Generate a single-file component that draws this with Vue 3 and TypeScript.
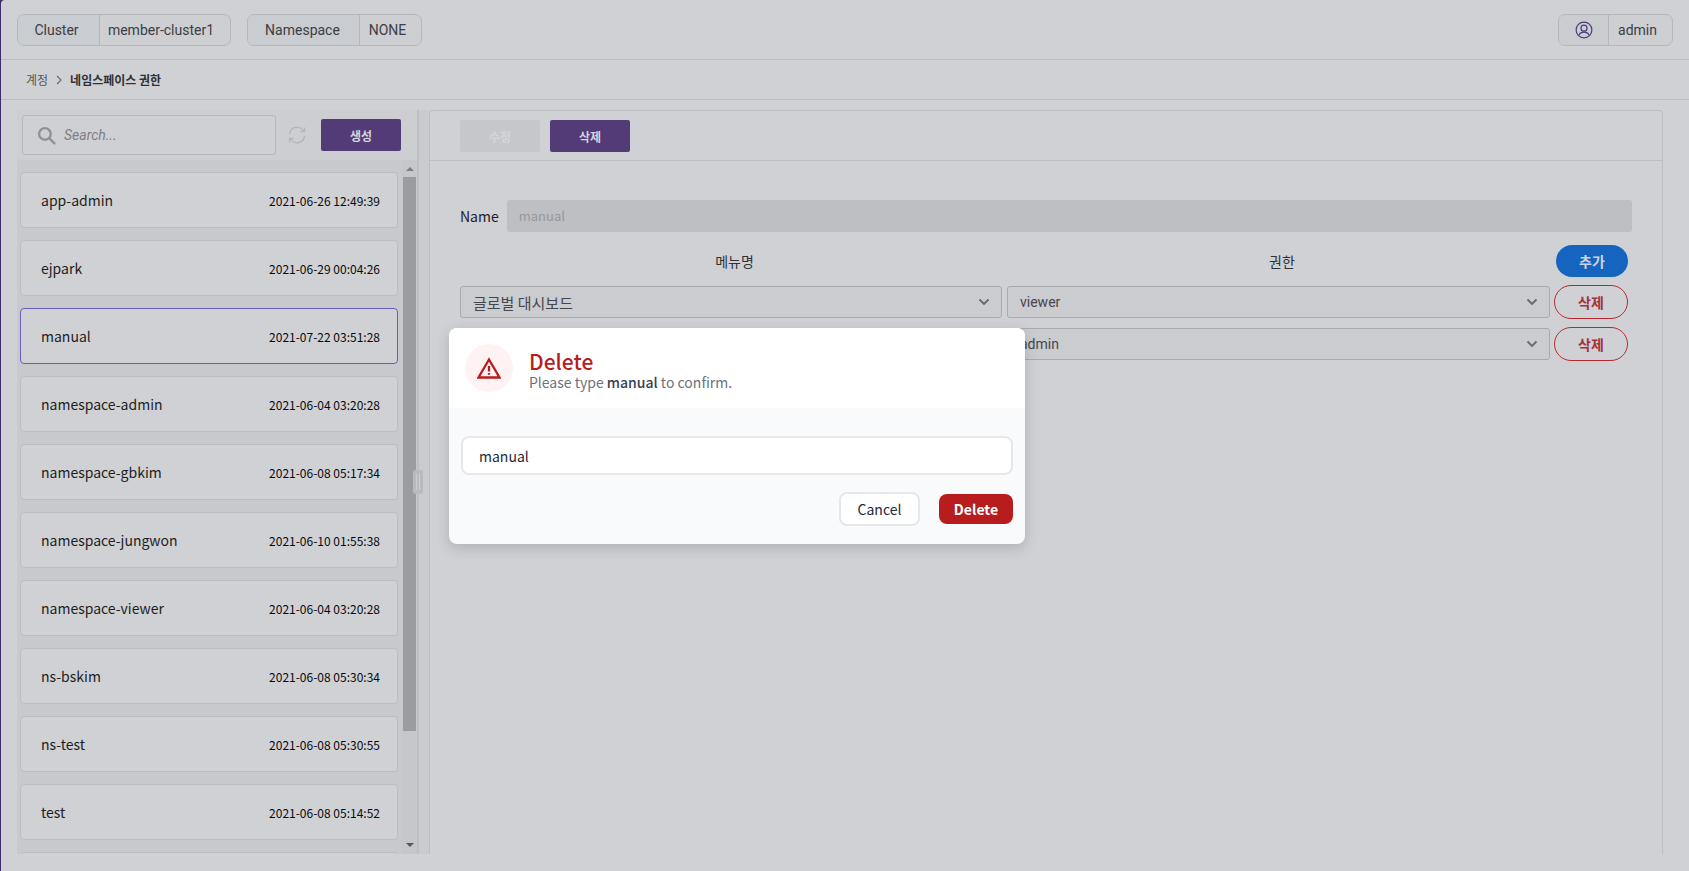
<template>
	<div class="app">
		<div class="shell">
			<header class="topbar">
				<div class="addon">
					<span class="addon__label addon__label--cluster">Cluster</span>
					<span class="addon__value addon__value--cluster">member-cluster1</span>
				</div>
				<div class="addon">
					<span class="addon__label addon__label--ns">Namespace</span>
					<span class="addon__value addon__value--ns">NONE</span>
				</div>
				<div class="addon addon--user">
					<span class="addon__label addon__label--user">
						<svg width="18" height="18" viewBox="0 0 24 24" fill="none" stroke="#4b3a78" stroke-width="1.6">
							<circle cx="12" cy="12" r="10.5" />
							<circle cx="12" cy="9.5" r="4" />
							<path d="M5 19c1.5-3 4-4.2 7-4.2s5.500 1.200 7 4.200" />
						</svg>
					</span>
					<span class="addon__value addon__value--user">admin</span>
				</div>
			</header>

			<nav class="crumbs">
				<span class="crumbs__root">계정</span>
				<svg width="8" height="10" viewBox="0 0 8 10" fill="none" stroke="#6b6d72" stroke-width="1.2"><path d="M2 1l4 4-4 4" /></svg>
				<span class="crumbs__current">네임스페이스 권한</span>
			</nav>

			<main class="content">
				<section class="side">
					<div class="side__tools">
						<div class="search">
							<svg width="19" height="19" viewBox="0 0 18 18" fill="none" stroke="#8f9196" stroke-width="2.200">
								<circle cx="7.500" cy="7.500" r="5.500" />
								<path d="M11.500 11.500l5 5" stroke-linecap="round" />
							</svg>
							<span>Search...</span>
						</div>
						<svg class="refresh" width="20" height="20" viewBox="0 0 24 24" fill="none" stroke="#b2b4b8" stroke-width="1.500">
							<path d="M3 11a9 9 0 0 1 15.500-5.500L21 8M21 3v5h-5" />
							<path d="M21 13a9 9 0 0 1-15.500 5.500L3 16M3 21v-5h5" />
						</svg>
						<button class="btn btn--primary btn--create" type="button">생성</button>
					</div>
					<div class="side__body">
						<ul class="list">
							<li v-for="item in items"
								:key="item.name"
								class="list__item"
								:class="{ 'list__item--active': item.name === 'manual' }">
								<span class="list__name">{{ item.name }}</span>
								<span class="list__date">{{ item.date }}</span>
							</li>
							<!-- next row, only its top edge shows above the fold -->
							<li class="list__item" />
						</ul>
						<div class="scroll">
							<span class="scroll__up" />
							<span class="scroll__thumb" />
							<span class="scroll__down" />
						</div>
					</div>
				</section>

				<div class="splitter">
					<span class="splitter__handle" />
				</div>

				<section class="detail">
					<div class="detail__tools">
						<button class="btn btn--disabled" type="button">수정</button>
						<button class="btn btn--primary" type="button">삭제</button>
					</div>
					<div class="detail__form">
						<div class="name-row">
							<label>Name</label>
							<div class="name-row__input">manual</div>
						</div>
						<div class="perm-grid">
							<div class="perm-grid__head">메뉴명</div>
							<div class="perm-grid__head">권한</div>
							<button class="pill pill--add" type="button">추가</button>
							<template v-for="row in rows" :key="row.role">
								<div class="select">
									<span class="select__text">{{ row.menu }}</span>
									<svg width="12" height="8" viewBox="0 0 12 8" fill="none" stroke="#66686d" stroke-width="1.800"><path d="M1.500 1.500L6 6l4.500-4.500" /></svg>
								</div>
								<div class="select">
									<span class="select__text select__text--role">{{ row.role }}</span>
									<svg width="12" height="8" viewBox="0 0 12 8" fill="none" stroke="#66686d" stroke-width="1.800"><path d="M1.500 1.500L6 6l4.500-4.500" /></svg>
								</div>
								<button class="pill pill--remove" type="button">삭제</button>
							</template>
						</div>
					</div>
				</section>
			</main>
		</div>

		<div class="dialog">
			<div class="dialog__head">
				<div class="dialog__icon">
					<svg width="24" height="24" viewBox="0 0 24 24" fill="none" stroke="#b91c1c" stroke-width="2.300">
						<path d="M12 3.500L22.500 21.500H1.500z" stroke-linejoin="miter" />
						<path d="M12 10v5.500M12 17v1.800" />
					</svg>
				</div>
				<div class="dialog__copy">
					<div class="dialog__title">Delete</div>
					<div class="dialog__text">Please type <strong>manual</strong> to confirm.</div>
				</div>
			</div>
			<div class="dialog__body">
				<div class="dialog__input">manual</div>
				<div class="dialog__actions">
					<button class="dialog__cancel" type="button">Cancel</button>
					<button class="dialog__delete" type="button">Delete</button>
				</div>
			</div>
		</div>
	</div>
</template>

<script setup lang="ts">
const items = [
	{ name: 'app-admin', date: '2021-06-26 12:49:39' },
	{ name: 'ejpark', date: '2021-06-29 00:04:26' },
	{ name: 'manual', date: '2021-07-22 03:51:28' },
	{ name: 'namespace-admin', date: '2021-06-04 03:20:28' },
	{ name: 'namespace-gbkim', date: '2021-06-08 05:17:34' },
	{ name: 'namespace-jungwon', date: '2021-06-10 01:55:38' },
	{ name: 'namespace-viewer', date: '2021-06-04 03:20:28' },
	{ name: 'ns-bskim', date: '2021-06-08 05:30:34' },
	{ name: 'ns-test', date: '2021-06-08 05:30:55' },
	{ name: 'test', date: '2021-06-08 05:14:52' },
]

// second row's menu sits behind the dialog
const rows = [
	{ menu: '글로벌 대시보드', role: 'viewer' },
	{ menu: '', role: 'admin' },
]
</script>

<style>
html,
body {
	margin: 0;
	overflow: hidden;
}
</style>

<style scoped>
.app {
	position: relative;
	width: 1689px;
	height: 871px;
	overflow: hidden;
	background: #3d2c6e;
	font-family: "Noto Sans CJK KR", "Noto Sans", sans-serif;
	color: #1f2024;
}

.shell {
	display: flex;
	flex-direction: column;
	height: 871px;
	margin-left: 1px;
	background: #d0d1d5;
	border-top-left-radius: 4px;
	padding-bottom: 17px;
	box-sizing: border-box;
}

.topbar {
	display: flex;
	flex: none;
	align-items: center;
	gap: 16px;
	height: 59px;
	padding: 0 16px;
	border-bottom: 1px solid #bdbec2;
	font-family: Roboto, sans-serif;
	font-size: 14px;
	color: #3c3e43;
}

.addon {
	display: flex;
	height: 32px;
	border: 1px solid #b5b7bb;
	border-radius: 7px;
	overflow: hidden;
	box-sizing: border-box;
	background: #cdcfd3;
}

.addon--user {
	margin-left: auto;
}

.addon__label {
	display: flex;
	align-items: center;
	justify-content: center;
	box-sizing: border-box;
	background: #c9ccd1;
	border-right: 1px solid #b5b7bb;
}

.addon__value {
	display: flex;
	align-items: center;
	justify-content: center;
	box-sizing: border-box;
	padding-right: 6px;
}

.addon__label--cluster { width: 82px; padding-right: 4px; }
.addon__value--cluster { width: 130px; padding-right: 8px; }
.addon__label--ns { width: 112px; padding-right: 2px; }
.addon__value--ns { width: 61px; }
.addon__label--user { width: 50px; }
.addon__value--user { width: 63px; }

.crumbs {
	display: flex;
	flex: none;
	align-items: center;
	gap: 7px;
	height: 39px;
	padding-left: 25px;
	border-bottom: 1px solid #bdbec2;
	font-size: 12px;
}

.crumbs__root {
	color: #54565b;
}

.crumbs__current {
	font-weight: 700;
	color: #2f3136;
}

.content {
	display: flex;
	flex: 1;
	min-height: 0;
	padding: 10px 26px 0 16px;
}

.side {
	display: flex;
	flex: none;
	flex-direction: column;
	width: 402px;
	box-sizing: border-box;
	background: #c8c9cd;
	border-right: 2px solid #bebfc3;
}

.side__tools {
	display: flex;
	flex: none;
	align-items: center;
	height: 50px;
	padding: 0 0 0 5px;
	background: #cdced2;
}

.search {
	display: flex;
	align-items: center;
	gap: 8px;
	width: 254px;
	height: 40px;
	padding-left: 14px;
	box-sizing: border-box;
	border: 1px solid #b5b7bb;
	border-radius: 3px;
	background: #cfd0d4;
	font-family: Roboto, sans-serif;
	font-size: 14px;
	font-style: italic;
	color: #7d7f84;
}

.refresh {
	margin: 0 14px 0 11px;
}

.btn {
	width: 80px;
	height: 32px;
	padding: 0;
	border: 0;
	border-radius: 2px;
	font-family: inherit;
	font-size: 12px;
	font-weight: 700;
}

.btn--primary {
	background: #533b78;
	color: #d6d3dc;
}

.btn--disabled {
	background: #c6c7cb;
	color: #d5d6d9;
}

.side__body {
	display: flex;
	flex: 1;
	min-height: 0;
}

.list {
	flex: 1;
	margin: 0;
	padding: 12px 4px 0 3px;
	list-style: none;
	overflow: hidden;
}

.list__item {
	display: flex;
	align-items: center;
	justify-content: space-between;
	height: 56px;
	margin-bottom: 12px;
	padding: 0 17px 0 20px;
	box-sizing: border-box;
	border: 1px solid #bcbdc2;
	border-radius: 4px;
	background: #d0d1d5;
}

.list__item--active {
	border-color: #6a5cc0;
}

.list__name {
	font-size: 14px;
	color: #1d1e22;
}

.list__date {
	font-size: 12px;
	color: #08090c;
}

.scroll {
	display: flex;
	flex: none;
	flex-direction: column;
	align-items: center;
	width: 15px;
	background: #c6c7cb;
}

.scroll__up,
.scroll__down {
	flex: none;
	width: 0;
	height: 0;
	border-left: 4px solid transparent;
	border-right: 4px solid transparent;
}

.scroll__up {
	margin: 7px 0 6px;
	border-bottom: 4px solid #7c7e83;
}

.scroll__down {
	margin-top: auto;
	margin-bottom: 7px;
	border-top: 4px solid #55575b;
}

.scroll__thumb {
	flex: none;
	width: 13px;
	height: 554px;
	background: #9b9ca0;
}

.splitter {
	position: relative;
	flex: none;
	width: 10px;
	background: #cacbcf;
}

.splitter__handle {
	position: absolute;
	left: -6px;
	top: 360px;
	display: flex;
	align-items: center;
	justify-content: center;
	width: 10px;
	height: 24px;
	border-radius: 3px;
	background: #b9babe;
}

.splitter__handle::before {
	content: "";
	width: 2px;
	height: 16px;
	border-left: 1px solid #cdced2;
	border-right: 1px solid #cdced2;
}

.detail {
	flex: 1;
	min-width: 0;
	box-sizing: border-box;
	border: 1px solid #bdbec2;
	border-bottom: 0;
	border-radius: 4px 4px 0 0;
}

.detail__tools {
	display: flex;
	gap: 10px;
	height: 50px;
	padding: 9px 30px 0;
	box-sizing: border-box;
	border-bottom: 1px solid #bdbec2;
}

.detail__form {
	padding: 39px 30px 0;
}

.name-row {
	display: flex;
	align-items: center;
	gap: 8px;
	font-size: 14px;
}

.name-row__input {
	flex: 1;
	height: 32px;
	padding-left: 12px;
	box-sizing: border-box;
	border-radius: 3px;
	background: #bebfc3;
	font-size: 13px;
	line-height: 31px;
	color: #96979c;
}

.perm-grid {
	display: grid;
	grid-template-columns: 542px 543px 78px;
	align-items: center;
	gap: 10px 5px;
	margin-top: 13px;
}

.perm-grid__head {
	padding-left: 7px;
	text-align: center;
	font-size: 14px;
	color: #2f3136;
}

.select {
	display: flex;
	align-items: center;
	justify-content: space-between;
	height: 32px;
	padding: 0 11px 0 12px;
	box-sizing: border-box;
	border: 1px solid #a9aaae;
	border-radius: 3px;
	background: #cbccd0;
	font-size: 15px;
	color: #45474c;
}

.select__text--role {
	font-family: Roboto, sans-serif;
	font-size: 14px;
}

.pill {
	height: 32px;
	padding: 0;
	border-radius: 17px;
	font-family: inherit;
	font-size: 14px;
	font-weight: 700;
}

.pill--add {
	width: 72px;
	margin: 0 0 -1px 1px;
	border: 0;
	background: #1464c0;
	color: #cfd5e0;
}

.pill--remove {
	width: 74px;
	height: 34px;
	margin: -1px 0 -1px -1px;
	border: 1px solid #b52a30;
	background: transparent;
	color: #a4323c;
}

.dialog {
	position: absolute;
	left: 449px;
	top: 328px;
	width: 576px;
	height: 216px;
	overflow: hidden;
	border-radius: 8px;
	background: #f9fafb;
	box-shadow: 0 4px 14px rgba(0, 0, 0, 0.16);
}

.dialog__head {
	display: flex;
	align-items: center;
	gap: 16px;
	height: 80px;
	padding-left: 16px;
	box-sizing: border-box;
	background: #fff;
}

.dialog__copy {
	padding-top: 3px;
}

.dialog__icon {
	display: flex;
	align-items: center;
	justify-content: center;
	width: 48px;
	height: 48px;
	border-radius: 50%;
	background: #fef2f2;
}

.dialog__title {
	font-size: 21px;
	font-weight: 500;
	line-height: 24px;
	color: #b91c1c;
}

.dialog__text {
	font-size: 14px;
	line-height: 18px;
	color: #6b7280;
}

.dialog__text strong {
	font-weight: 500;
	color: #374151;
}

.dialog__body {
	padding: 28px 12px 0;
}

.dialog__input {
	height: 39px;
	padding-left: 16px;
	box-sizing: border-box;
	border: 2px solid #e5e7eb;
	border-radius: 8px;
	background: #fff;
	font-size: 14px;
	line-height: 36px;
	color: #1f2937;
}

.dialog__actions {
	display: flex;
	align-items: center;
	justify-content: flex-end;
	gap: 19px;
	margin-top: 17px;
}

.dialog__cancel {
	width: 81px;
	height: 34px;
	padding: 0;
	border: 2px solid #e5e7eb;
	border-radius: 8px;
	background: #fff;
	font-family: inherit;
	font-size: 14px;
	color: #1f2937;
}

.dialog__delete {
	width: 74px;
	height: 30px;
	padding: 0;
	border: 0;
	border-radius: 8px;
	background: #b91c1c;
	font-family: inherit;
	font-size: 14px;
	font-weight: 700;
	color: #fff;
}
</style>
